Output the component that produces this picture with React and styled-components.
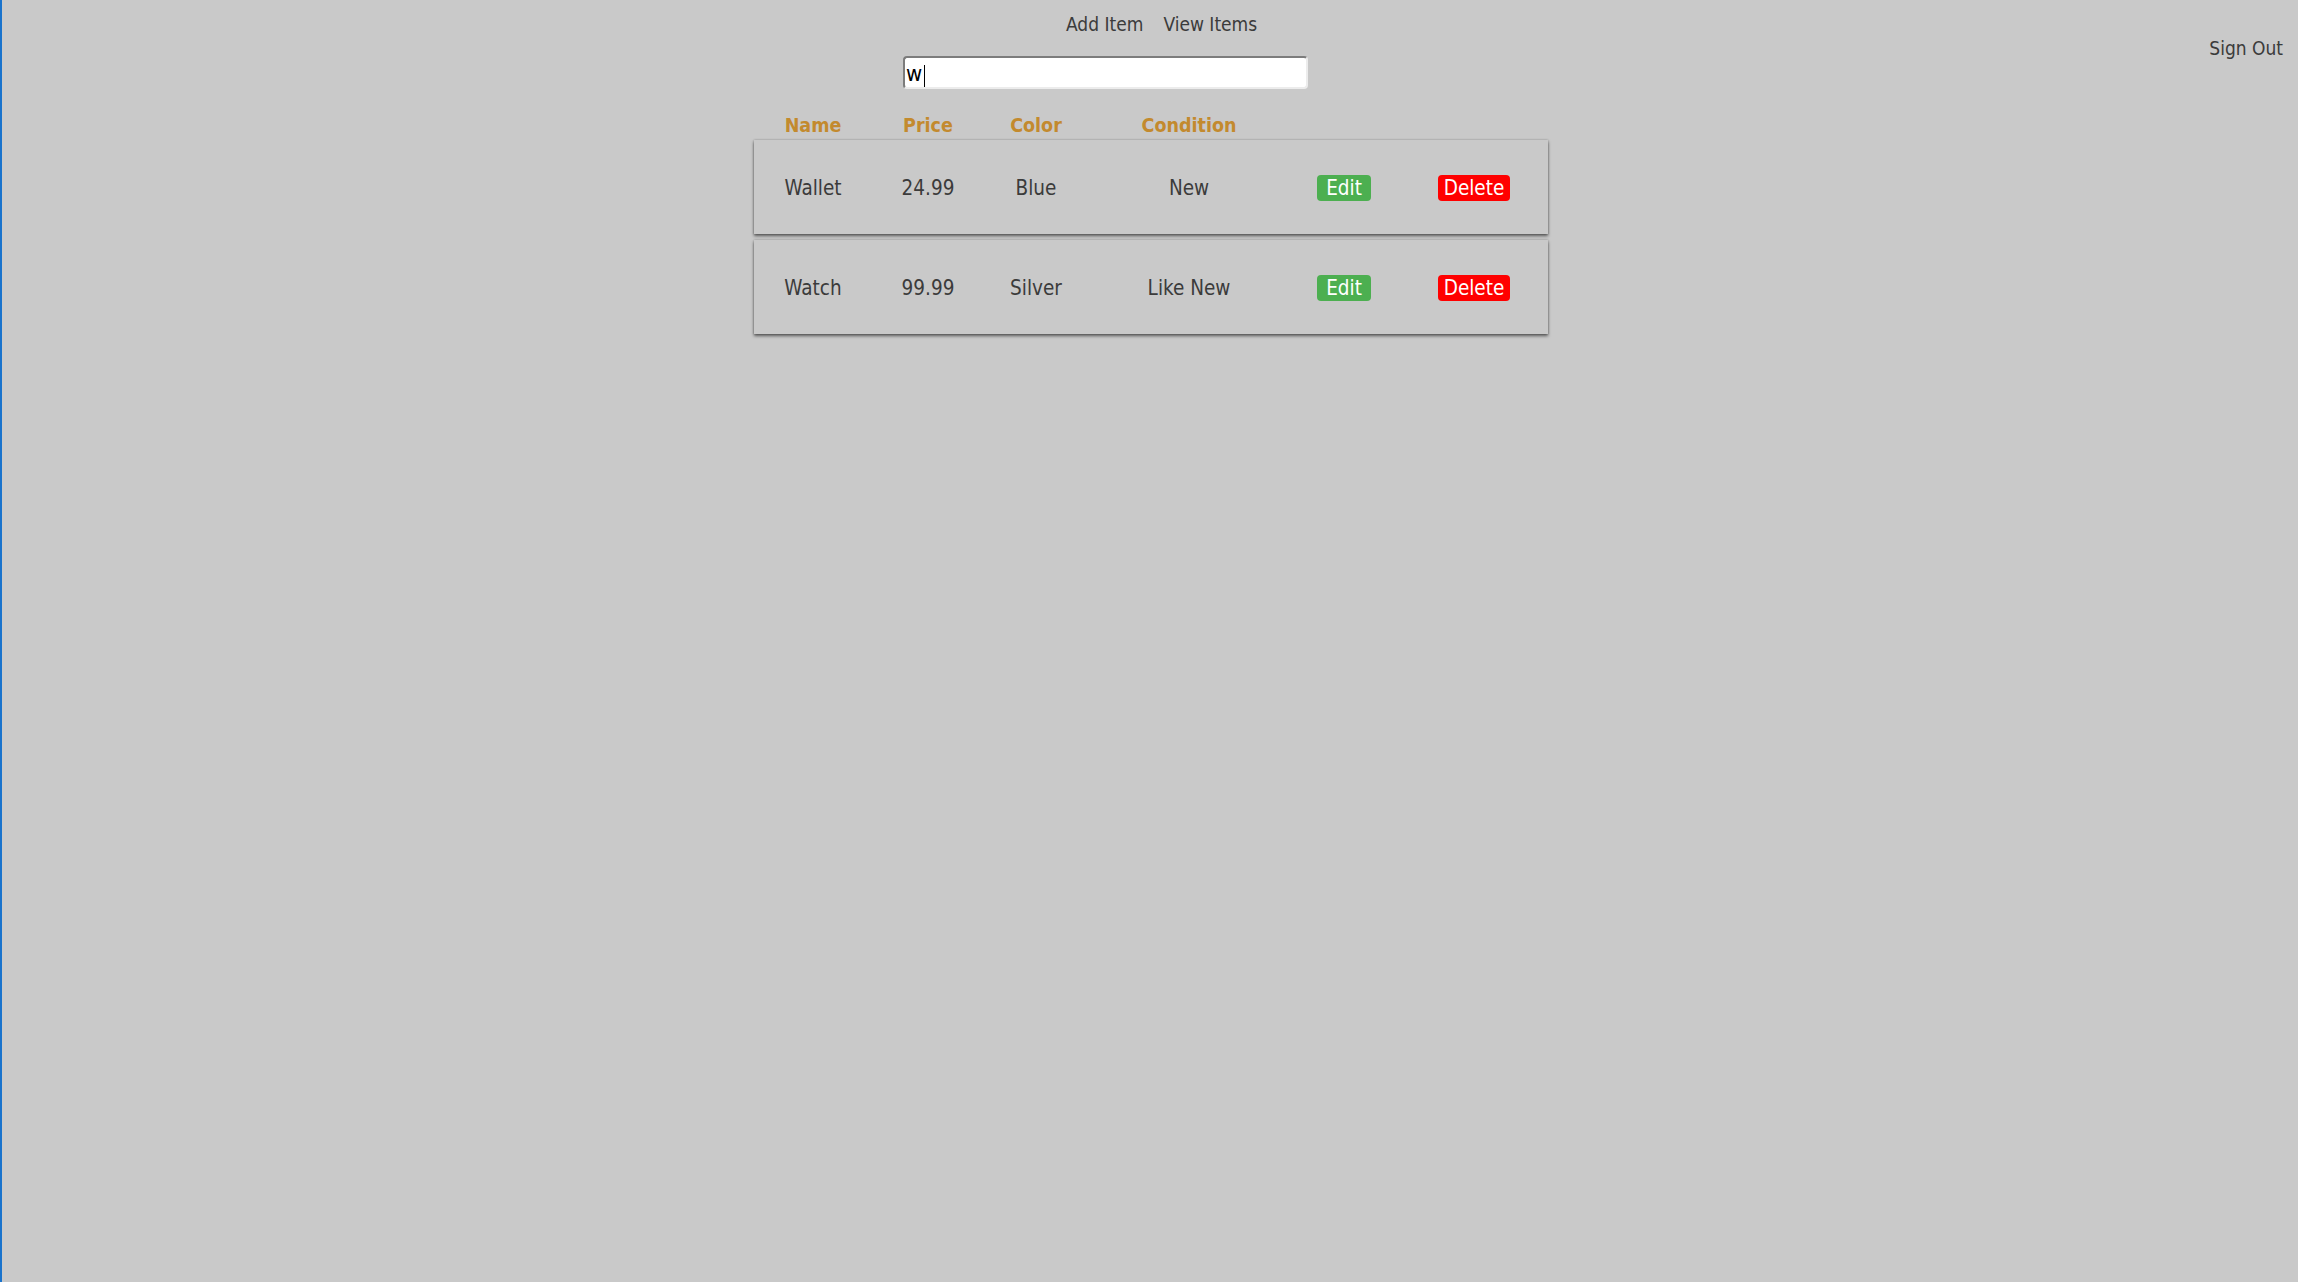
import React from "react";
import styled, { createGlobalStyle } from "styled-components";

const Global = createGlobalStyle`
  html, body {
    margin: 0;
    padding: 0;
    background: #c9c9c9;
  }
  body {
    font-family: "DejaVu Sans Condensed", "DejaVu Sans", sans-serif;
    color: #3b3b3b;
  }
`;

const Page = styled.div`
  min-height: 1282px;
  box-sizing: border-box;
  border-left: 2px solid #1a73cc;
  display: grid;
  grid-template-columns: 1fr 796px 1fr;
`;

const Center = styled.main`
  grid-column: 2;
  display: flex;
  flex-direction: column;
  padding-left: 2px;
`;

const Side = styled.aside`
  grid-column: 3;
  display: flex;
  justify-content: flex-end;
  padding: 36px 15px 0 0;
`;

const Nav = styled.nav`
  display: flex;
  justify-content: flex-start;
  gap: 20px;
  padding: 12px 0 0 312px;
  height: 44px;
  box-sizing: border-box;
`;

const NavLink = styled.a`
  font-size: 19px;
  line-height: 24px;
  color: #3b3b3b;
  text-decoration: none;
  cursor: pointer;
`;

const SearchBox = styled.div`
  position: relative;
  margin: 12px 0 0 149px;
  width: 405px;
  height: 33px;
`;

const Search = styled.input`
  display: block;
  width: 100%;
  height: 100%;
  box-sizing: border-box;
  border-style: solid;
  border-width: 2px;
  border-color: #7c7c7c #ececec #ececec #7c7c7c;
  border-radius: 4px;
  background: #fff;
  font-family: "DejaVu Sans Condensed", "DejaVu Sans", sans-serif;
  font-size: 22px;
  color: #000;
  padding: 2px 1px 0;
  outline: none;
`;

const Caret = styled.span`
  position: absolute;
  left: 21px;
  top: 9px;
  width: 1px;
  height: 22px;
  background: #000;
  pointer-events: none;
`;

const Grid = styled.div`
  display: grid;
  grid-template-columns: 118px 112px 104px 202px 108px 152px;
  align-items: center;
  justify-items: center;
`;

const HeaderRow = styled(Grid)`
  height: 51px;
  align-items: end;
  box-sizing: border-box;
  padding-bottom: 2px;
`;

const HeadCell = styled.div`
  font-weight: bold;
  font-size: 19.5px;
  line-height: 24px;
  color: #c38a2e;
`;

const Rows = styled.div`
  display: flex;
  flex-direction: column;
  gap: 6px;
`;

const Row = styled(Grid)`
  height: 94px;
  background: #c9c9c9;
  box-shadow: 0 2px 3px rgba(0, 0, 0, 0.55), 0 0 2px rgba(0, 0, 0, 0.25);
`;

const Cell = styled.div`
  font-size: 20.5px;
  color: #3b3b3b;
  padding-top: 2px;
`;

const Action = styled.button`
  border: none;
  border-radius: 4px;
  background: ${(p) => (p.$danger ? "#ff0000" : "#4caf50")};
  color: #fff;
  font-family: "DejaVu Sans Condensed", "DejaVu Sans", sans-serif;
  font-size: 20.5px;
  line-height: 26px;
  height: 26px;
  padding: 0 ${(p) => (p.$danger ? "6px" : "9px")};
  margin-top: 2px;
  cursor: pointer;
`;

const items = [
  { name: "Wallet", price: "24.99", color: "Blue", condition: "New" },
  { name: "Watch", price: "99.99", color: "Silver", condition: "Like New" },
];

export default function App() {
  return (
    <>
      <Global />
      <Page>
        <Center>
          <Nav>
            <NavLink>Add Item</NavLink>
            <NavLink>View Items</NavLink>
          </Nav>
          <SearchBox>
            <Search defaultValue="w" />
            <Caret />
          </SearchBox>
          <HeaderRow>
            <HeadCell>Name</HeadCell>
            <HeadCell>Price</HeadCell>
            <HeadCell>Color</HeadCell>
            <HeadCell>Condition</HeadCell>
            <div />
            <div />
          </HeaderRow>
          <Rows>
            {items.map((it) => (
              <Row key={it.name}>
                <Cell>{it.name}</Cell>
                <Cell>{it.price}</Cell>
                <Cell>{it.color}</Cell>
                <Cell>{it.condition}</Cell>
                <Action>Edit</Action>
                <Action $danger>Delete</Action>
              </Row>
            ))}
          </Rows>
        </Center>
        <Side>
          <NavLink>Sign Out</NavLink>
        </Side>
      </Page>
    </>
  );
}
